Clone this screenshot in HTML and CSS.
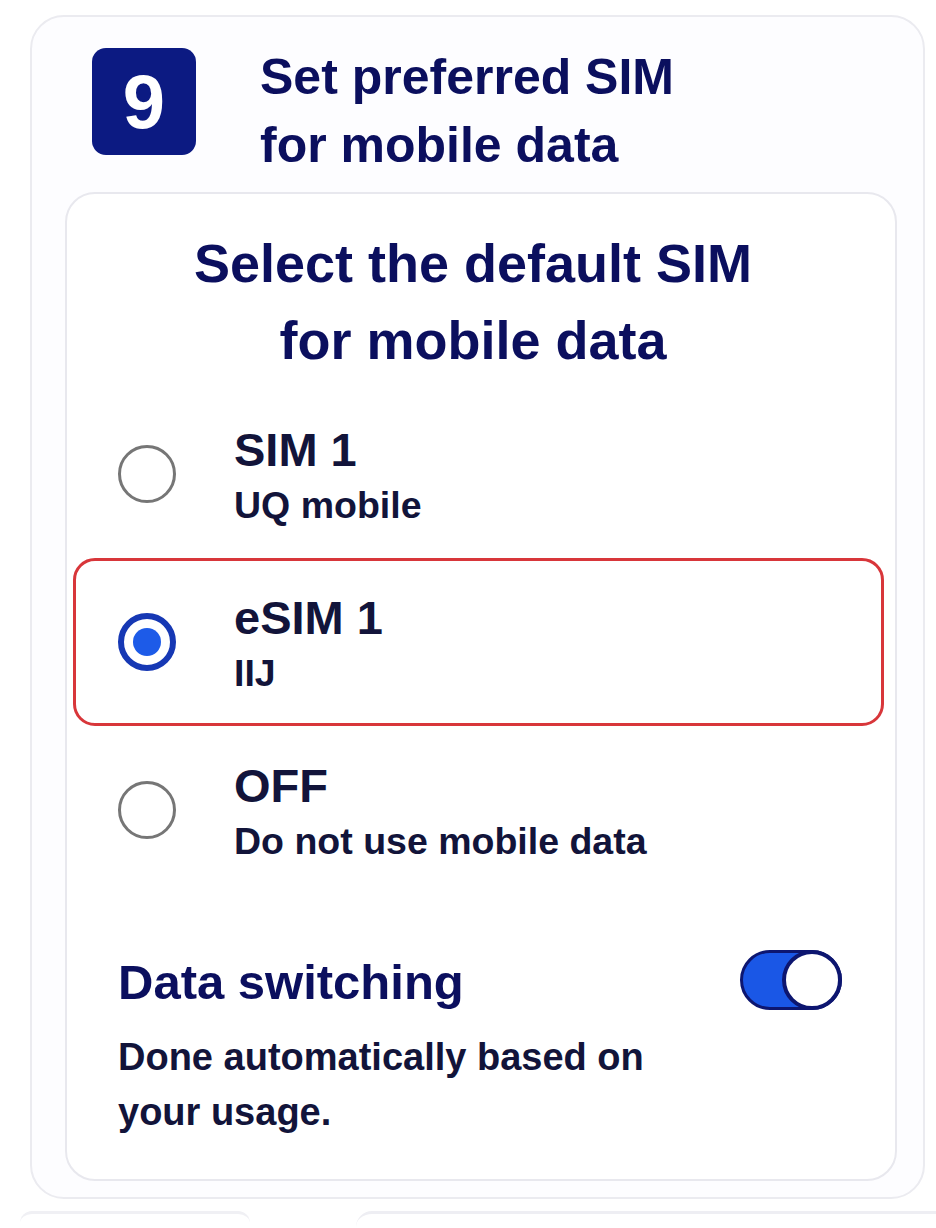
FILE: index.html
```html
<!doctype html>
<html>
    <head>
        <meta http-equiv="Content-Type" content="text/html; charset=utf-8">
        <link rel="stylesheet" href="styles.css">
    </head>
    <body>
        <div class="page">
            <div class="card">
                <div class="head">
                    <div class="badge">9</div>
                    <div class="title">Set preferred SIM<br>for mobile data</div>
                </div>
                <div class="panel">
                    <div class="panel-title">Select the default SIM<br>for mobile data</div>
                    <ul class="options">
                        <li class="option">
                            <span class="radio"></span>
                            <div class="option-text">
                                <div class="option-name">SIM 1</div>
                                <div class="option-sub">UQ mobile</div>
                            </div>
                        </li>
                        <li class="option selected">
                            <span class="radio checked"></span>
                            <div class="option-text">
                                <div class="option-name">eSIM 1</div>
                                <div class="option-sub">IIJ</div>
                            </div>
                        </li>
                        <li class="option">
                            <span class="radio"></span>
                            <div class="option-text">
                                <div class="option-name">OFF</div>
                                <div class="option-sub">Do not use mobile data</div>
                            </div>
                        </li>
                    </ul>
                    <div class="switch">
                        <div class="switch-row">
                            <div class="switch-name">Data switching</div>
                            <span class="toggle"></span>
                        </div>
                        <div class="switch-desc">Done automatically based on your usage.</div>
                    </div>
                </div>
            </div>
            <div class="next">
                <span class="next-left"></span>
                <span class="next-right"></span>
            </div>
        </div>
    </body>
</html>
```

FILE: styles.css
```css
body{
    margin: 0;
    background: #ffffff;
    font-family: "Liberation Sans", Arial, sans-serif;
    font-weight: bold;
}
.page{
    padding: 15px 11px 0 30px;
}
.card{
    border: 2px solid #ebebf0;
    border-radius: 34px;
    background: #fdfdff;
    padding: 31px 26px 16px 33px;
}
.head{
    display: flex;
    align-items: flex-start;
    gap: 64px;
    padding-left: 27px;
    margin-bottom: 13px;
}
.badge{
    width: 104px;
    height: 107px;
    border-radius: 14px;
    background: #0c1a82;
    color: #ffffff;
    font-size: 76px;
    line-height: 107px;
    text-align: center;
    flex: none;
}
.title{
    margin-top: -5px;
    font-size: 50px;
    line-height: 68px;
    color: #0b0f5e;
}
.panel{
    border: 2px solid #e8e8ee;
    border-radius: 30px;
    background: #ffffff;
    padding: 31px 11px 39px 6px;
}
.panel-title{
    margin: 0 11px 11px 0;
    font-size: 54px;
    line-height: 77px;
    text-align: center;
    color: #0b0f5e;
}
.options{
    margin: 0;
    padding: 0;
    list-style: none;
}
.option{
    height: 168px;
    box-sizing: border-box;
    display: flex;
    align-items: center;
    gap: 58px;
    padding-left: 42px;
    border: 3px solid transparent;
    border-radius: 22px;
}
.option.selected{
    border-color: #d8363a;
}
.radio{
    width: 58px;
    height: 58px;
    box-sizing: border-box;
    border: 3px solid #767676;
    border-radius: 50%;
    flex: none;
    position: relative;
}
.radio.checked{
    border: 6px solid #1638b4;
}
.radio.checked::after{
    content: "";
    position: absolute;
    top: 9px;
    left: 9px;
    width: 28px;
    height: 28px;
    border-radius: 50%;
    background: #1d5be8;
}
.option-text{
    padding-top: 10px;
    color: #12143a;
}
.option-name{
    font-size: 47px;
    line-height: 52px;
}
.option-sub{
    font-size: 37.5px;
    line-height: 59px;
}
.switch{
    margin-top: 58px;
    padding: 0 42px 0 45px;
    color: #12143a;
}
.switch-row{
    display: flex;
    align-items: center;
    justify-content: space-between;
}
.switch-name{
    font-size: 49px;
    line-height: 60px;
    color: #0b0f5e;
}
.toggle{
    width: 102px;
    height: 60px;
    box-sizing: border-box;
    border: 3px solid #0d1670;
    border-radius: 30px;
    background: #1a57e6;
    position: relative;
    margin-top: -4px;
}
.toggle::after{
    content: "";
    position: absolute;
    top: -3px;
    right: -3px;
    width: 60px;
    height: 60px;
    box-sizing: border-box;
    border: 4px solid #0d1670;
    border-radius: 50%;
    background: #ffffff;
}
.switch-desc{
    margin-top: 18px;
    max-width: 570px;
    font-size: 38px;
    line-height: 55px;
}
.next{
    display: flex;
    justify-content: space-between;
    margin: 12px -11px 0 -10px;
    height: 20px;
}
.next-left{
    width: 230px;
    border-top: 3px solid #f0f0f4;
    border-radius: 12px 12px 0 0;
}
.next-right{
    width: 580px;
    border-top: 3px solid #eeeef3;
    border-radius: 16px 0 0 0;
}
```
